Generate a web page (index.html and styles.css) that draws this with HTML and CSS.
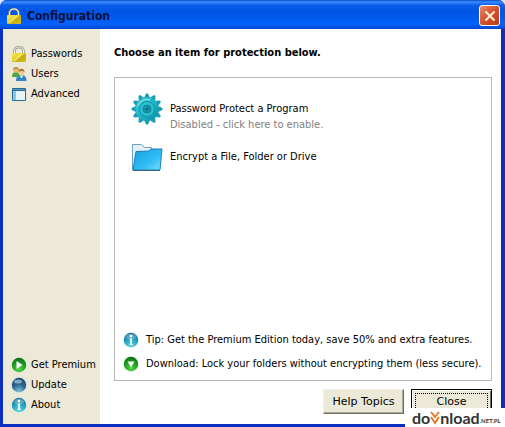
FILE: index.html
```
<!DOCTYPE html>
<html lang="en">
<head>
  <meta charset="UTF-8">
  <title>Configuration</title>
  <link rel="stylesheet" href="styles.css">
</head>
<body>
  <!-- Shared gradients and symbols -->
  <svg class="defs" aria-hidden="true">
    <defs>
      <linearGradient id="gold" x1="0" y1="0" x2="1" y2="1">
        <stop offset="0" stop-color="#f4e95c"/>
        <stop offset=".45" stop-color="#e3cf22"/>
        <stop offset=".55" stop-color="#c8ab10"/>
        <stop offset="1" stop-color="#d9be1c"/>
      </linearGradient>
      <radialGradient id="green" cx=".5" cy=".8" r=".8">
        <stop offset="0" stop-color="#4fd840"/>
        <stop offset=".6" stop-color="#1c9a20"/>
        <stop offset="1" stop-color="#0b6a14"/>
      </radialGradient>
      <radialGradient id="cyan" cx=".5" cy=".85" r=".85">
        <stop offset="0" stop-color="#58dcea"/>
        <stop offset=".6" stop-color="#2399b4"/>
        <stop offset="1" stop-color="#1a6a90"/>
      </radialGradient>
      <radialGradient id="navy" cx=".5" cy=".9" r=".9">
        <stop offset="0" stop-color="#79c3e2"/>
        <stop offset=".5" stop-color="#2c668f"/>
        <stop offset="1" stop-color="#1c426c"/>
      </radialGradient>
      <linearGradient id="teal" x1="0" y1="0" x2="1" y2="1">
        <stop offset="0" stop-color="#3fd0dc"/>
        <stop offset=".5" stop-color="#1fb4c6"/>
        <stop offset="1" stop-color="#1088a0"/>
      </linearGradient>
      <linearGradient id="sky" x1="0" y1="0" x2="1" y2="1">
        <stop offset="0" stop-color="#1a9fe0"/>
        <stop offset=".6" stop-color="#30bdf4"/>
        <stop offset="1" stop-color="#7be0ff"/>
      </linearGradient>
      <symbol id="lock" viewBox="0 0 16 16">
        <path d="M3.500 8V5a4.500 4 0 0 1 9 0v3" fill="none" stroke="#8b8b80" stroke-width="2.400"/>
        <path d="M3.500 8V5a4.500 4 0 0 1 9 0v3" fill="none" stroke="#eeeee2" stroke-width="1.100"/>
        <rect x="1" y="7" width="14" height="9" rx="1" fill="url(#gold)"/>
        <path d="M1.500 15l8-7.500h3l-8 8z" fill="#fff79a" opacity=".5"/>
      </symbol>
      <symbol id="info" viewBox="0 0 16 16">
        <circle cx="8" cy="8" r="7.800" fill="#d4eef2"/>
        <circle cx="8" cy="8" r="7.200" fill="url(#cyan)"/>
        <ellipse cx="8" cy="4.500" rx="5" ry="3" fill="#fff" opacity=".25"/>
        <circle cx="8" cy="4" r="1.300" fill="#fff"/>
        <path d="M6.500 6.500H9V12h1v1H6.500v-1h.7V7.500h-.7z" fill="#fff"/>
      </symbol>
      <path id="tooth" d="M12.500 6l2.500-5.500h2L19.500 6z"/>
      <g id="teeth">
        <use href="#tooth"/>
        <use href="#tooth" transform="rotate(90 16 16)"/>
        <use href="#tooth" transform="rotate(180 16 16)"/>
        <use href="#tooth" transform="rotate(270 16 16)"/>
      </g>
    </defs>
  </svg>

  <div class="window">
    <header class="titlebar">
      <svg class="title-icon" aria-hidden="true"><use href="#lock"/></svg>
      <h1>Configuration</h1>
      <button type="button" class="close-x" aria-label="Close window">
        <svg viewBox="0 0 12 12" aria-hidden="true"><path d="M1.500 1.500l9 9M10.500 1.500l-9 9"/></svg>
      </button>
    </header>

    <div class="body">
      <nav class="sidebar">
        <div class="group">
          <a href="#passwords"><svg class="icon" aria-hidden="true"><use href="#lock"/></svg>Passwords</a>
          <a href="#users">
            <svg class="icon" viewBox="0 0 16 16" aria-hidden="true">
              <path d="M1 11c0-4 2-5 4-5s4 1 4 5z" fill="#49a842"/>
              <circle cx="5" cy="4" r="2.800" fill="#e9bd78"/>
              <path d="M2 4c0-4 6-4 6 0-2-1.500-4-1.500-6 0z" fill="#c58a3c"/>
              <path d="M5 15c0-5 3-6 5.500-6s5 1 5 6z" fill="#2f86c8"/>
              <path d="M8.500 9.500l2 3 2-3z" fill="#dff3fb"/>
              <circle cx="10.500" cy="6.500" r="3" fill="#f2cd8e"/>
              <path d="M7.300 6c0-4.500 6.400-4.500 6.400 0-2-1.500-4-1.500-6.400 0z" fill="#a8733a"/>
            </svg>Users</a>
          <a href="#advanced">
            <svg class="icon" viewBox="0 0 16 16" aria-hidden="true">
              <rect x="1" y="2" width="14" height="13" rx="1" fill="#2a6a90"/>
              <rect x="2" y="5" width="3" height="9" fill="#82cbea"/>
              <rect x="5" y="5" width="9" height="9" fill="#e6f4fa"/>
              <path d="M2 3.500h12" stroke="#4f9cc0"/>
            </svg>Advanced</a>
        </div>
        <div class="group">
          <a href="#premium">
            <svg class="icon" viewBox="0 0 16 16" aria-hidden="true">
              <circle cx="8" cy="8" r="7.800" fill="#d5efcf"/>
              <circle cx="8" cy="8" r="7.200" fill="url(#green)"/>
              <path d="M5.500 4l6 4-6 4z" fill="#fff"/>
            </svg>Get Premium</a>
          <a href="#update">
            <svg class="icon" viewBox="0 0 16 16" aria-hidden="true">
              <circle cx="8" cy="8" r="7.800" fill="#c9dbe4"/>
              <circle cx="8" cy="8" r="7.200" fill="url(#navy)"/>
              <ellipse cx="7" cy="4.500" rx="4" ry="2" fill="#bcdcf0" opacity=".6"/>
            </svg>Update</a>
          <a href="#about"><svg class="icon" aria-hidden="true"><use href="#info"/></svg>About</a>
        </div>
      </nav>

      <main class="content">
        <h2>Choose an item for protection below.</h2>
        <section class="panel">
          <a class="item" href="#program">
            <svg class="item-icon" viewBox="0 0 32 32" aria-hidden="true">
              <g fill="#1c9fb4">
                <use href="#teeth"/>
                <use href="#teeth" transform="rotate(30 16 16)"/>
                <use href="#teeth" transform="rotate(60 16 16)"/>
              </g>
              <circle cx="16" cy="16" r="11.500" fill="url(#teal)"/>
              <circle cx="16" cy="16" r="7.500" fill="#2cc0cf" stroke="#1292a6"/>
              <circle cx="16" cy="16" r="4" fill="#169bb0" stroke="#0e8499"/>
              <path d="M16 13.500v5M13.500 16h5" stroke="#08687e"/>
              <path d="M7 13a9.500 9.500 0 0 1 12-6" fill="none" stroke="#8deff2"/>
            </svg>
            <span class="item-text">Password Protect a Program<small>Disabled - click here to enable.</small></span>
          </a>
          <a class="item" href="#encrypt">
            <svg class="item-icon" viewBox="0 0 32 32" aria-hidden="true">
              <path d="M1.500 29V3.500h9l3 3h7l1 3V29z" fill="#e2f1f8" stroke="#6f9fbd"/>
              <path d="M2 29L5 10.500l13-.5 2-2h11L29 29z" fill="url(#sky)" stroke="#1c7eb4"/>
              <path d="M2 29.500h27" stroke="#41667c"/>
            </svg>
            <span class="item-text">Encrypt a File, Folder or Drive</span>
          </a>
          <div class="tips">
            <a href="#tip"><svg class="icon" aria-hidden="true"><use href="#info"/></svg>Tip: Get the Premium Edition today, save 50% and extra features.</a>
            <a href="#download">
              <svg class="icon" viewBox="0 0 16 16" aria-hidden="true">
                <circle cx="8" cy="8" r="7.800" fill="#d5efcf"/>
                <circle cx="8" cy="8" r="7.200" fill="url(#green)"/>
                <path d="M4.500 5.500h7l-3.500 6z" fill="#fff"/>
              </svg>Download: Lock your folders without encrypting them (less secure).</a>
          </div>
        </section>
        <div class="actions">
          <button type="button" class="btn">Help Topics</button>
          <button type="button" class="btn btn-default">Close</button>
        </div>
      </main>
    </div>
  </div>

  <!-- Site badge over the bottom right corner -->
  <div class="badge">
    <span>do</span><svg viewBox="0 0 10 14" aria-hidden="true"><path d="M1 1l4 5 4-5M1 6l4 6 4-6"/></svg><span>nload</span><small>.NET.PL</small>
  </div>
</body>
</html>
```
FILE: styles.css
```
* {
  box-sizing: border-box;
}

body {
  margin: 0;
  background: #d5e6f8;
  font-family: "DejaVu Sans Condensed", "DejaVu Sans", Tahoma, sans-serif;
  font-size: 11px;
  line-height: 16px;
  color: #000;
}

.defs {
  position: absolute;
  width: 0;
  height: 0;
}

a {
  color: inherit;
  text-decoration: none;
}

/* Window frame */
.window {
  display: flex;
  flex-direction: column;
  min-height: 100vh;
  padding: 0 4px 3px 3px;
  background: #0a2fc0;
  border-radius: 7px 7px 0 0;
}

.titlebar {
  display: flex;
  align-items: center;
  gap: 5px;
  height: 29px;
  margin: 0 -4px 0 -3px;
  padding: 2px 5px 0 6px;
  border-radius: 7px 7px 0 0;
  background: linear-gradient(#0a4cc8 0, #3a8cff 2px, #0a5ee8 5px, #0054e3 12px, #0462fa 24px, #0046d0 100%);
}

.titlebar h1 {
  flex: 1;
  margin: 0;
  font-size: 12px;
  color: #03113c;
}

.title-icon {
  width: 16px;
  height: 16px;
}

.close-x {
  display: flex;
  align-items: center;
  justify-content: center;
  width: 21px;
  height: 21px;
  padding: 0;
  border: 1px solid #fff;
  border-radius: 3px;
  background: linear-gradient(135deg, #e98a6c, #d4512c 50%, #b83c18);
}

.close-x svg {
  width: 12px;
  height: 12px;
  stroke: #fff3dc;
  stroke-width: 2;
}

.body {
  display: flex;
  flex: 1;
}

/* Sidebar */
.sidebar {
  display: flex;
  flex: none;
  flex-direction: column;
  justify-content: space-between;
  width: 97px;
  padding: 15px 0 9px 8px;
  background: #ece9d8;
}

.sidebar a {
  display: flex;
  align-items: center;
  gap: 4px;
  height: 20px;
  white-space: nowrap;
}

.icon {
  flex: none;
  width: 16px;
  height: 16px;
}

/* Main area */
.content {
  display: flex;
  flex: 1;
  flex-direction: column;
  min-width: 0;
  padding: 16px 9px 10px 14px;
  background: #fff;
}

.content h2 {
  margin: 0 0 16px;
  font-size: 11px;
  line-height: 16px;
}

.panel {
  display: flex;
  flex: 1;
  flex-direction: column;
  gap: 16px;
  padding: 15px 7px 8px 16px;
  border: 1px solid #b8b8b8;
}

.item {
  display: flex;
  gap: 7px;
  height: 32px;
}

.item-icon {
  flex: none;
  width: 32px;
  height: 32px;
}

.item-text {
  padding-top: 8px;
}

.item-text small {
  display: block;
  font-size: 11px;
  color: #808080;
}

.tips {
  display: flex;
  flex-direction: column;
  gap: 8px;
  margin-top: auto;
  margin-left: -8px;
}

.tips a {
  display: flex;
  align-items: center;
  gap: 7px;
  white-space: nowrap;
}

/* Buttons */
.actions {
  display: flex;
  justify-content: flex-end;
  gap: 7px;
  margin-top: 8px;
}

.btn {
  width: 81px;
  height: 25px;
  padding: 0;
  border: 1px solid;
  border-color: #f4f2e8 #716f64 #716f64 #f4f2e8;
  box-shadow: inset -1px -1px #aca899;
  background: #ece9d8;
  font-family: "DejaVu Sans", Verdana, sans-serif;
  font-size: 11px;
}

.btn-default {
  border-color: #000;
  outline: 1px dotted #000;
  outline-offset: -5px;
  box-shadow: inset 1px 1px #fff, inset -1px -1px #716f64;
}

.badge {
  position: absolute;
  right: 0;
  bottom: 0;
  display: flex;
  align-items: center;
  width: 100px;
  height: 19px;
  padding-left: 7px;
  background: #fff;
  font-family: Lato, sans-serif;
  font-size: 16px;
  font-weight: bold;
  color: #333;
}

.badge svg {
  flex: none;
  width: 10px;
  height: 14px;
  fill: none;
  stroke: #e8772a;
  stroke-width: 2;
}

.badge small {
  padding-top: 6px;
  font-size: 6px;
}
```
